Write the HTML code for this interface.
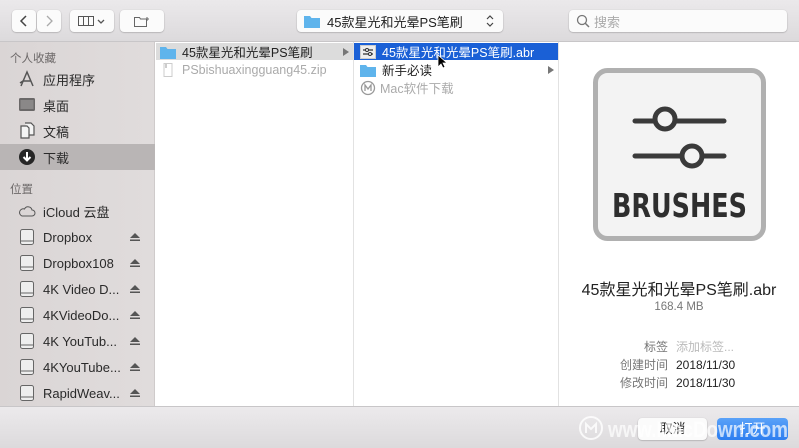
<!DOCTYPE html>
<html><head><meta charset="utf-8">
<style>
*{margin:0;padding:0;box-sizing:border-box}
body{width:799px;height:448px;overflow:hidden;font-family:"Liberation Sans","Noto Sans CJK SC",sans-serif;font-size:13px;color:#222;background:#fff;position:relative}
.abs{position:absolute}
.tb{left:0;top:0;width:799px;height:42px;background:linear-gradient(#ebe9eb,#dcdadc);border-bottom:1px solid #c8c6c8}
.btn{position:absolute;background:#fbfbfb;border-radius:4px;box-shadow:0 0.5px 1.5px rgba(0,0,0,.3)}
.side{left:0;top:42px;width:155px;height:364px;background:linear-gradient(90deg,#dad5d5,#e0dcdc);border-right:1px solid #cfcbcb}
.hd{position:absolute;left:10px;font-size:11.5px;color:#6e6a6a}
.it{position:absolute;left:18px;height:26px;width:137px;display:flex;align-items:center;font-size:13px;color:#2a2a2a}
.it .ic{width:18px;height:18px;margin-right:7px;flex:none}
.ej{position:absolute;left:130px;width:10px;height:8px}
.bot{left:0;top:406px;width:799px;height:42px;background:linear-gradient(#eceaec,#dcdadc);border-top:1px solid #c8c6c8}
.row{position:absolute;height:17px;display:flex;align-items:center;font-size:12.5px}
</style></head><body>
<div class="abs tb">
  <div class="btn" style="left:12px;top:10px;width:24px;height:22px;"><svg width="24" height="22"><path d="M14 6 L9 11 L14 16" stroke="#444" stroke-width="1.5" fill="none"/></svg></div>
  <div class="btn" style="left:37px;top:10px;width:24px;height:22px;"><svg width="24" height="22"><path d="M10 6 L15 11 L10 16" stroke="#aaa" stroke-width="1.3" fill="none"/></svg></div>
  <div class="btn" style="left:70px;top:10px;width:44px;height:22px;"><svg width="44" height="22"><rect x="8.5" y="6.5" width="15" height="9" stroke="#555" fill="none"/><path d="M13.5 7v8M18.5 7v8" stroke="#555"/><path d="M28 10l3 3 3-3" stroke="#555" stroke-width="1.3" fill="none"/></svg></div>
  <div class="btn" style="left:120px;top:10px;width:44px;height:22px;"><svg width="44" height="22"><path d="M14.5 7.5h5l1 1.5h6v7.5h-12z" stroke="#666" fill="none"/><path d="M27 7v4M25 9h4" stroke="#666"/></svg></div>
  <div class="btn" style="left:297px;top:10px;width:206px;height:22px;display:flex;align-items:center;">
    <svg width="18" height="14" style="margin-left:6px"><path d="M1 2h6l1.5 2H17v10H1z" fill="#5fb4ec"/></svg>
    <span style="margin-left:6px;font-size:13px;color:#222">45款星光和光晕PS笔刷</span>
    <svg width="10" height="14" style="position:absolute;right:8px"><path d="M2 5l3-3 3 3M2 9l3 3 3-3" stroke="#444" fill="none" stroke-width="1.2"/></svg>
  </div>
  <div class="btn" style="left:569px;top:10px;width:218px;height:22px;display:flex;align-items:center;">
    <svg width="16" height="16" style="margin-left:6px"><circle cx="7" cy="7" r="4.5" stroke="#777" fill="none" stroke-width="1.3"/><path d="M10 10l4 4" stroke="#777" stroke-width="1.5"/></svg>
    <span style="margin-left:3px;color:#aaa;font-size:13px">搜索</span>
  </div>
</div>

<div class="abs side">
  <div class="hd" style="top:8px">个人收藏</div>
  <div class="it" style="top:24px"><svg class="ic" viewBox="0 0 18 18"><path d="M3 16L9 2l6 14M5 11h8M2 13l3-2" stroke="#555" stroke-width="1.5" fill="none"/></svg>应用程序</div>
  <div class="it" style="top:50px"><svg class="ic" viewBox="0 0 18 18"><rect x="1" y="2" width="16" height="13" rx="1.5" fill="#6a6868"/><rect x="2.5" y="4" width="13" height="9" fill="#8a8888"/></svg>桌面</div>
  <div class="it" style="top:76px"><svg class="ic" viewBox="0 0 18 18"><path d="M3 4h6l2 2v10H3z M7 1h6l3 3v9h-5" stroke="#555" fill="#f4f4f4" stroke-width="1.2"/></svg>文稿</div>
  <div class="it" style="top:102px;left:0;width:155px;padding-left:18px;background:#b9b5b5"><svg class="ic" viewBox="0 0 18 18"><circle cx="9" cy="9" r="8" fill="#262626"/><path d="M9 4v8M5.5 9l3.5 3.5 3.5-3.5" stroke="#fff" stroke-width="2" fill="none"/></svg>下载</div>
  <div class="hd" style="top:139px">位置</div>
  <div class="it" style="top:156px"><svg class="ic" viewBox="0 0 18 18"><path d="M4 14h10a3 3 0 0 0 0-6 4 4 0 0 0-7.5-1A3.5 3.5 0 0 0 4 14z" stroke="#555" fill="none"/></svg>iCloud 云盘</div>
  <div class="it" style="top:182px"><svg class="ic" viewBox="0 0 18 18"><rect x="2.5" y="1.5" width="13" height="15" rx="2" stroke="#666" fill="#eee"/><path d="M3 13h12" stroke="#666"/></svg>Dropbox</div>
  <div class="it" style="top:208px"><svg class="ic" viewBox="0 0 18 18"><rect x="2.5" y="1.5" width="13" height="15" rx="2" stroke="#666" fill="#eee"/><path d="M3 13h12" stroke="#666"/></svg>Dropbox108</div>
  <div class="it" style="top:234px"><svg class="ic" viewBox="0 0 18 18"><rect x="2.5" y="1.5" width="13" height="15" rx="2" stroke="#666" fill="#eee"/><path d="M3 13h12" stroke="#666"/></svg>4K Video D...</div>
  <div class="it" style="top:260px"><svg class="ic" viewBox="0 0 18 18"><rect x="2.5" y="1.5" width="13" height="15" rx="2" stroke="#666" fill="#eee"/><path d="M3 13h12" stroke="#666"/></svg>4KVideoDo...</div>
  <div class="it" style="top:286px"><svg class="ic" viewBox="0 0 18 18"><rect x="2.5" y="1.5" width="13" height="15" rx="2" stroke="#666" fill="#eee"/><path d="M3 13h12" stroke="#666"/></svg>4K YouTub...</div>
  <div class="it" style="top:312px"><svg class="ic" viewBox="0 0 18 18"><rect x="2.5" y="1.5" width="13" height="15" rx="2" stroke="#666" fill="#eee"/><path d="M3 13h12" stroke="#666"/></svg>4KYouTube...</div>
  <div class="it" style="top:338px"><svg class="ic" viewBox="0 0 18 18"><rect x="2.5" y="1.5" width="13" height="15" rx="2" stroke="#666" fill="#eee"/><path d="M3 13h12" stroke="#666"/></svg>RapidWeav...</div>
  <svg class="ej" style="top:191px"><path d="M5 0L10 5H0z M0 6.5h10v1.5H0z" fill="#555"/></svg>
  <svg class="ej" style="top:217px"><path d="M5 0L10 5H0z M0 6.5h10v1.5H0z" fill="#555"/></svg>
  <svg class="ej" style="top:243px"><path d="M5 0L10 5H0z M0 6.5h10v1.5H0z" fill="#555"/></svg>
  <svg class="ej" style="top:269px"><path d="M5 0L10 5H0z M0 6.5h10v1.5H0z" fill="#555"/></svg>
  <svg class="ej" style="top:295px"><path d="M5 0L10 5H0z M0 6.5h10v1.5H0z" fill="#555"/></svg>
  <svg class="ej" style="top:321px"><path d="M5 0L10 5H0z M0 6.5h10v1.5H0z" fill="#555"/></svg>
  <svg class="ej" style="top:347px"><path d="M5 0L10 5H0z M0 6.5h10v1.5H0z" fill="#555"/></svg>
</div>

<div class="abs" style="left:353px;top:42px;width:1px;height:364px;background:#e2e2e2"></div>
<div class="row" style="left:156px;top:43px;width:197px;background:#dcdcdc">
  <svg width="18" height="14" style="margin-left:3px"><path d="M1 2h6l1.5 2H17v10H1z" fill="#5fb4ec"/></svg>
  <span style="margin-left:5px">45款星光和光晕PS笔刷</span>
  <svg width="8" height="8" style="position:absolute;right:3px"><path d="M1 0l6 4-6 4z" fill="#777"/></svg>
</div>
<div class="row" style="left:156px;top:61px;width:197px;color:#aaa">
  <svg width="18" height="14" style="margin-left:3px"><path d="M5 0.5h8v13H5z" stroke="#ccc" fill="#fff"/><path d="M7 1v4" stroke="#999"/></svg>
  <span style="margin-left:5px">PSbishuaxingguang45.zip</span>
</div>
<div class="abs" style="left:558px;top:42px;width:1px;height:364px;background:#e2e2e2"></div>
<div class="row" style="left:354px;top:43px;width:204px;background:#1a60d6;color:#fff">
  <svg width="16" height="14" style="margin-left:6px"><rect x="0.5" y="0.5" width="15" height="13" fill="#eee" stroke="#ccc"/><path d="M3 5h10M3 9h10" stroke="#333" stroke-width="1.2"/><circle cx="7" cy="5" r="1.5" fill="#fff" stroke="#333"/><circle cx="10" cy="9" r="1.5" fill="#fff" stroke="#333"/></svg>
  <span style="margin-left:6px">45款星光和光晕PS笔刷.abr</span>
</div>
<svg class="abs" style="left:437px;top:54px" width="10" height="16"><path d="M1 1v12l3-3 2 4 2-1-2-4h4z" fill="#000" stroke="#fff" stroke-width="0.8"/></svg>
<div class="row" style="left:354px;top:61px;width:204px">
  <svg width="18" height="14" style="margin-left:5px"><path d="M1 2h6l1.5 2H17v10H1z" fill="#5fb4ec"/></svg>
  <span style="margin-left:5px">新手必读</span>
  <svg width="8" height="8" style="position:absolute;right:3px"><path d="M1 0l6 4-6 4z" fill="#777"/></svg>
</div>
<div class="row" style="left:354px;top:79px;width:204px;color:#aaa">
  <svg width="16" height="16" style="margin-left:6px"><circle cx="8" cy="8" r="6.5" stroke="#999" fill="none" stroke-width="1.3"/><path d="M5 11V5l3 4 3-4v6" stroke="#999" fill="none" stroke-width="1.3"/></svg>
  <span style="margin-left:4px">Mac软件下载</span>
</div>

<svg class="abs" style="left:590px;top:66px" width="180" height="178">
  <rect x="5.5" y="4.5" width="168" height="168" rx="12" fill="#f3f3f3" stroke="#b0b0b0" stroke-width="5"/>
  <path d="M45 55H134M45 90H134" stroke="#3a3a3a" stroke-width="5" stroke-linecap="round"/>
  <circle cx="75" cy="53" r="10" fill="#f3f3f3" stroke="#3a3a3a" stroke-width="5"/>
  <circle cx="102" cy="90" r="10" fill="#f3f3f3" stroke="#3a3a3a" stroke-width="5"/>
  <text x="22" y="151" font-family="DejaVu Sans,Liberation Sans,sans-serif" font-weight="bold" font-size="33" fill="#2e2e2e" textLength="135" lengthAdjust="spacingAndGlyphs">BRUSHES</text>
</svg>
<div class="abs" style="left:559px;top:276px;width:240px;text-align:center;font-size:16px;color:#222">45款星光和光晕PS笔刷.abr</div>
<div class="abs" style="left:559px;top:301px;width:240px;text-align:center;font-size:11.5px;color:#777">168.4 MB</div>
<div class="abs" style="left:600px;top:338px;width:68px;text-align:right;font-size:12px;color:#777;line-height:18px">标签<br>创建时间<br>修改时间</div>
<div class="abs" style="left:676px;top:338px;font-size:12px;color:#222;line-height:18px"><span style="color:#bbb">添加标签...</span><br>2018/11/30<br>2018/11/30</div>

<div class="abs bot">
  <div class="btn" style="left:638px;top:11px;width:69px;height:22px;text-align:center;line-height:22px;font-size:13px">取消</div>
  <div class="abs" style="left:717px;top:11px;width:71px;height:22px;border-radius:4px;background:linear-gradient(#5aa2f8,#2d7ef0);color:#fff;text-align:center;line-height:22px;font-size:13px">打开</div>
  <svg class="abs" style="left:578px;top:8px" width="220" height="28">
    <circle cx="13" cy="13" r="11" stroke="rgba(255,255,255,.8)" fill="none" stroke-width="2"/>
    <path d="M8 18V9l5 5 5-5v9" stroke="rgba(255,255,255,.8)" fill="none" stroke-width="2"/>
    <text x="30" y="22" font-family="Liberation Sans,sans-serif" font-weight="bold" font-size="22" fill="rgba(255,255,255,.7)" textLength="180" lengthAdjust="spacingAndGlyphs">www.MacDown.com</text>
  </svg>
</div>
</body></html>
